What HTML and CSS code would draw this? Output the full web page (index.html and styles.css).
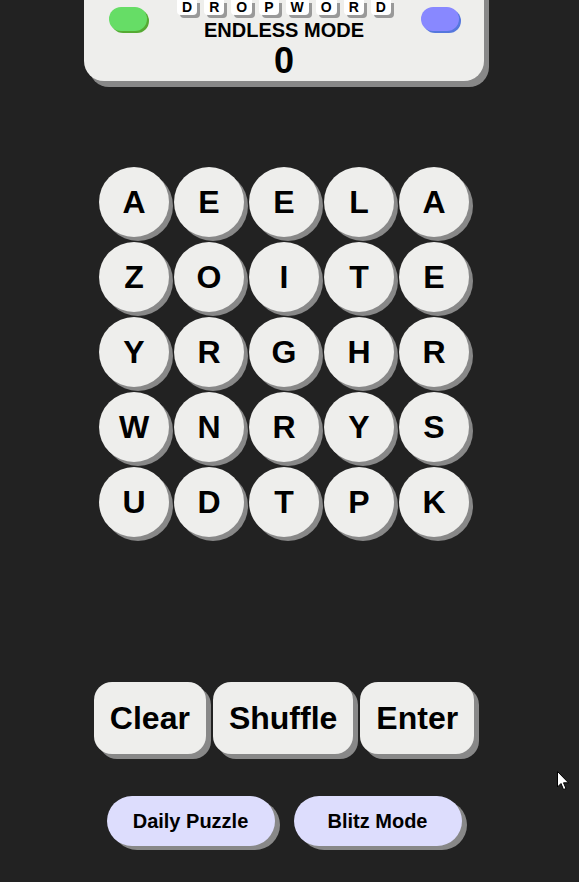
FILE: index.html
```html
<!DOCTYPE html>
<html>
<head>
<meta charset="utf-8">
<link rel="stylesheet" href="styles.css">
</head>
<body>
<div class="app">
  <header class="panel">
    <span class="pill pill-green"></span>
    <div class="panel-center">
      <div class="logo">
        <span class="tile">D</span><span class="tile">R</span><span class="tile">O</span><span class="tile">P</span><span class="tile">W</span><span class="tile">O</span><span class="tile">R</span><span class="tile">D</span>
      </div>
      <div class="mode">ENDLESS MODE</div>
      <div class="score">0</div>
    </div>
    <span class="pill pill-blue"></span>
  </header>

  <div class="grid">
    <div class="cell">A</div><div class="cell">E</div><div class="cell">E</div><div class="cell">L</div><div class="cell">A</div>
    <div class="cell">Z</div><div class="cell">O</div><div class="cell">I</div><div class="cell">T</div><div class="cell">E</div>
    <div class="cell">Y</div><div class="cell">R</div><div class="cell">G</div><div class="cell">H</div><div class="cell">R</div>
    <div class="cell">W</div><div class="cell">N</div><div class="cell">R</div><div class="cell">Y</div><div class="cell">S</div>
    <div class="cell">U</div><div class="cell">D</div><div class="cell">T</div><div class="cell">P</div><div class="cell">K</div>
  </div>

  <div class="actions">
    <button class="btn">Clear</button>
    <button class="btn">Shuffle</button>
    <button class="btn">Enter</button>
  </div>

  <div class="modes">
    <button class="mode-btn">Daily Puzzle</button>
    <button class="mode-btn">Blitz Mode</button>
  </div>
</div>
<svg class="cursor" width="13" height="20" viewBox="0 0 13 20">
  <path d="M0.5 0.5 L0.5 16 L4 12.5 L6.5 18.5 L9 17.5 L6.5 11.8 L11.5 11.8 Z" fill="#fff" stroke="#000" stroke-width="1"/>
</svg>
</body>
</html>
```
FILE: styles.css
```css
html, body {
  margin: 0;
  padding: 0;
}
body {
  background: #222222;
  font-family: "Liberation Sans", Arial, sans-serif;
  color: #000;
  height: 882px;
  overflow: hidden;
  position: relative;
}
.app {
  width: 568px;
  display: flex;
  flex-direction: column;
  align-items: center;
}
.panel {
  width: 400px;
  box-sizing: border-box;
  margin-top: -12px;
  padding: 12px 25px 2px 25px;
  background: #eeeeec;
  border-radius: 0 0 20px 20px;
  box-shadow: 5px 6px 0 #888;
  display: flex;
  justify-content: space-between;
  align-items: flex-start;
}
.pill {
  display: block;
  width: 38px;
  height: 24px;
  border-radius: 12px;
  margin-top: 7px;
}
.pill-green {
  background: #66dd66;
  box-shadow: 2px 2px 0 #55aa33;
}
.pill-blue {
  background: #8888ff;
  box-shadow: 2px 2px 0 #5577dd;
}
.panel-center {
  display: flex;
  flex-direction: column;
  align-items: center;
}
.logo {
  display: flex;
  gap: 7px;
  height: 15px;
}
.tile {
  display: block;
  height: 15px;
  line-height: 15px;
  padding: 0 5px;
  text-align: center;
  font-size: 14px;
  font-weight: bold;
  background: #fff;
  border-radius: 0 0 4px 4px;
  box-shadow: 3px 3px 0 #999;
}
.mode {
  margin-top: 5px;
  font-size: 20px;
  line-height: 20px;
  font-weight: bold;
}
.score {
  margin-top: 3px;
  font-size: 36px;
  line-height: 36px;
  font-weight: bold;
}
.grid {
  margin-top: 86px;
  display: grid;
  grid-template-columns: repeat(5, 70px);
  grid-auto-rows: 70px;
  gap: 5px;
}
.cell {
  width: 70px;
  height: 70px;
  border-radius: 50%;
  background: #eeeeec;
  box-shadow: 4px 4px 0 #888;
  display: flex;
  align-items: center;
  justify-content: center;
  font-size: 32px;
  font-weight: bold;
}
.actions {
  margin-top: 145px;
  display: flex;
  gap: 7px;
}
.btn {
  font-family: "Liberation Sans", Arial, sans-serif;
  font-size: 32px;
  line-height: 38px;
  font-weight: bold;
  color: #000;
  padding: 17px 16px;
  border: none;
  border-radius: 18px;
  background: #eeeeec;
  box-shadow: 5px 5px 0 #888;
}
.modes {
  margin-top: 42px;
  display: flex;
  gap: 19px;
}
.mode-btn {
  font-family: "Liberation Sans", Arial, sans-serif;
  width: 168px;
  height: 50px;
  border: none;
  border-radius: 25px;
  background: #ddddfd;
  box-shadow: 5px 4px 0 #888;
  font-size: 20px;
  font-weight: bold;
  color: #000;
}
.cursor {
  position: absolute;
  left: 557px;
  top: 771px;
}
```
